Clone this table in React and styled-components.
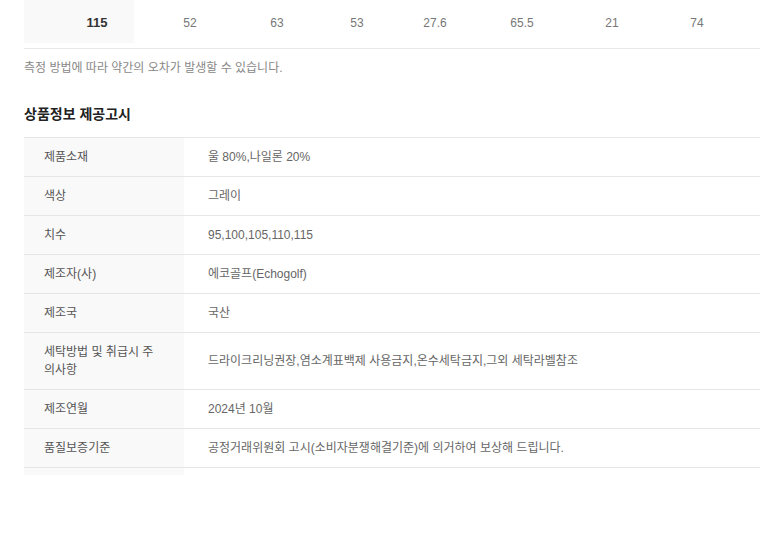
import styled, { createGlobalStyle } from "styled-components";

const GlobalStyle = createGlobalStyle`
  body {
    margin: 0;
    background: #fff;
    font-family: "Liberation Sans", "Noto Sans CJK KR", sans-serif;
  }
`;

const Page = styled.div`
  width: 736px;
  padding: 0 20px 0 24px;
`;

const SizeRow = styled.div`
  display: grid;
  grid-template-columns: 110px 112px 62px 98px 58px 116px 64px 106px;
  height: 48px;
  border-bottom: 1px solid #e8e8e8;
`;

const SizeCell = styled.div`
  height: ${(p) => (p.$head ? "43px" : "46px")};
  line-height: 46px;
  text-align: center;
  font-size: ${(p) => (p.$head ? "13px" : "12px")};
  font-weight: ${(p) => (p.$head ? "bold" : "normal")};
  color: ${(p) => (p.$head ? "#333" : "#777")};
  background: ${(p) => (p.$head ? "#f9f9f9" : "transparent")};
  padding-left: ${(p) => (p.$head ? "36px" : "0")};
`;

const Note = styled.p`
  margin: 10px 0 0;
  font-size: 12px;
  line-height: 18px;
  color: #888;
`;

const Heading = styled.h3`
  margin: 27px 0 13px;
  font-size: 14px;
  line-height: 20px;
  font-weight: bold;
  color: #222;
`;

const InfoTable = styled.div`
  border-top: 1px solid #e6e6e6;
`;

const InfoRow = styled.div`
  display: grid;
  grid-template-columns: 160px 1fr;
  border-bottom: 1px solid #e6e6e6;
`;

const Label = styled.div`
  background: #f9f9f9;
  padding: 10px 20px;
  font-size: 12px;
  line-height: 18px;
  color: #555;
`;

const Value = styled.div`
  display: flex;
  align-items: center;
  padding: 10px 24px;
  font-size: 12px;
  line-height: 18px;
  color: #666;
`;

const LabelTail = styled.div`
  width: 160px;
  height: 7px;
  background: #f9f9f9;
`;

const sizes = ["52", "63", "53", "27.6", "65.5", "21", "74"];

const info = [
  ["제품소재", "울 80%,나일론 20%"],
  ["색상", "그레이"],
  ["치수", "95,100,105,110,115"],
  ["제조자(사)", "에코골프(Echogolf)"],
  ["제조국", "국산"],
  ["세탁방법 및 취급시 주의사항", "드라이크리닝권장,염소계표백제 사용금지,온수세탁금지,그외 세탁라벨참조"],
  ["제조연월", "2024년 10월"],
  ["품질보증기준", "공정거래위원회 고시(소비자분쟁해결기준)에 의거하여 보상해 드립니다."],
];

function App() {
  return (
    <Page>
      <GlobalStyle />
      <SizeRow>
        <SizeCell $head>115</SizeCell>
        {sizes.map((s, i) => (
          <SizeCell key={i}>{s}</SizeCell>
        ))}
      </SizeRow>
      <Note>측정 방법에 따라 약간의 오차가 발생할 수 있습니다.</Note>
      <Heading>상품정보 제공고시</Heading>
      <InfoTable>
        {info.map(([label, value]) => (
          <InfoRow key={label}>
            <Label>{label}</Label>
            <Value>{value}</Value>
          </InfoRow>
        ))}
      </InfoTable>
      <LabelTail />
    </Page>
  );
}

export default App;
